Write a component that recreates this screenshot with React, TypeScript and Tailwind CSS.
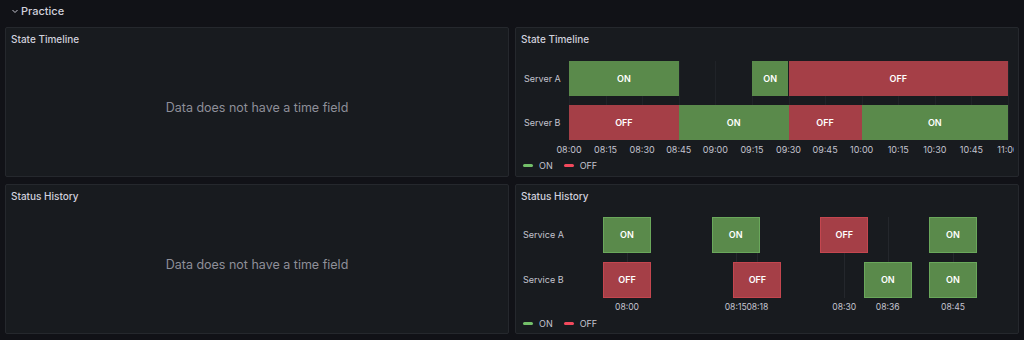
import type { ReactNode } from 'react';

type Seg = { from: number; to: number; on: boolean };

const GREEN = '#5a8a4b';
const RED = '#a53f47';

const TIMELINE: { name: string; segs: Seg[] }[] = [
  {
    name: 'Server A',
    segs: [
      { from: 0, to: 45, on: true },
      { from: 75, to: 90, on: true },
      { from: 90, to: 180, on: false },
    ],
  },
  {
    name: 'Server B',
    segs: [
      { from: 0, to: 45, on: false },
      { from: 45, to: 90, on: true },
      { from: 90, to: 120, on: false },
      { from: 120, to: 180, on: true },
    ],
  },
];

const TICKS = ['08:00', '08:15', '08:30', '08:45', '09:00', '09:15', '09:30', '09:45', '10:00', '10:15', '10:30', '10:45', '11:00'];

// status history: minute offset from 08:00
const HISTORY: { name: string; cells: { min: number; on: boolean }[] }[] = [
  {
    name: 'Service A',
    cells: [
      { min: 0, on: true },
      { min: 15, on: true },
      { min: 30, on: false },
      { min: 45, on: true },
    ],
  },
  {
    name: 'Service B',
    cells: [
      { min: 0, on: false },
      { min: 18, on: false },
      { min: 36, on: true },
      { min: 45, on: true },
    ],
  },
];

const HISTORY_TIMES = [
  { min: 0, label: '08:00' },
  { min: 15, label: '08:15' },
  { min: 18, label: '08:18' },
  { min: 30, label: '08:30' },
  { min: 36, label: '08:36' },
  { min: 45, label: '08:45' },
];

function Panel({ title, children }: { title: string; children?: ReactNode }) {
  return (
    <div className="h-[150px] bg-[#181b1f] border border-[#25282d] rounded-[2px] flex flex-col overflow-hidden">
      <div className="h-[22px] pl-[5px] pt-[4px] text-[10px] font-medium text-[#d0d0dc] leading-[14px]">{title}</div>
      <div className="flex-1 relative">{children}</div>
    </div>
  );
}

function NoData() {
  return (
    <div className="h-full flex items-center justify-center pb-[10px] text-[12.5px] text-[#8e8f99]">
      Data does not have a time field
    </div>
  );
}

function Legend() {
  return (
    <div className="flex items-center gap-[6px] pl-[7px] text-[9px] text-[#c4c4cf]">
      <div className="flex items-center gap-[6px]">
        <span className="w-[10px] h-[3px] rounded-full bg-[#73bf69]" />
        <span>ON</span>
      </div>
      <div className="flex items-center gap-[6px] ml-[5px]">
        <span className="w-[10px] h-[3px] rounded-full bg-[#f2495c]" />
        <span>OFF</span>
      </div>
    </div>
  );
}

function StateTimeline() {
  const W = 439;
  const pct = (m: number) => (m / 180) * W;
  return (
    <div className="pt-[11px]">
      <div className="flex">
        <div className="w-[53px] shrink-0 flex flex-col gap-[9px] pl-[8px]">
          {TIMELINE.map((r) => (
            <div key={r.name} className="h-[35px] flex items-center text-[9px] text-[#c4c4cf]">
              {r.name}
            </div>
          ))}
        </div>
        <div className="relative w-[439px] flex flex-col gap-[9px]">
          {TICKS.map((t, i) => (
            <div key={t} className="absolute top-0 bottom-0 w-px bg-[#202328]" style={{ left: pct(i * 15) }} />
          ))}
          {TIMELINE.map((r) => (
            <div key={r.name} className="relative h-[35px]">
              {r.segs.map((s) => (
                <div
                  key={s.from}
                  className="absolute top-0 bottom-0 flex items-center justify-center text-[9px] font-semibold text-white"
                  style={{ left: pct(s.from), width: pct(s.to) - pct(s.from), background: s.on ? GREEN : RED }}
                >
                  {s.on ? 'ON' : 'OFF'}
                </div>
              ))}
            </div>
          ))}
        </div>
      </div>
      {/* the last tick is cut by the plot edge, as in grafana */}
      <div className="relative h-[19px] w-[498px] overflow-hidden text-[9px] text-[#c4c4cf]">
        {TICKS.map((t, i) => (
          <span key={t} className="absolute top-[3px] -translate-x-1/2" style={{ left: 53 + pct(i * 15) }}>
            {t}
          </span>
        ))}
      </div>
      <Legend />
    </div>
  );
}

function StatusHistory() {
  const x = (m: number) => 111 + m * 7.244;
  return (
    <div className="pt-[10px]">
      <div className="flex">
        <div className="w-[60px] shrink-0 flex flex-col gap-[9px] pl-[7px]">
          {HISTORY.map((r) => (
            <div key={r.name} className="h-[36px] flex items-center text-[9px] text-[#c4c4cf]">
              {r.name}
            </div>
          ))}
        </div>
        <div className="relative flex-1 flex flex-col gap-[9px] -ml-[60px]">
          {HISTORY_TIMES.map((t) => (
            <div key={t.label} className="absolute top-0 bottom-0 w-px bg-[#24272c]" style={{ left: x(t.min) }} />
          ))}
          {HISTORY.map((r) => (
            <div key={r.name} className="relative h-[36px]">
              {r.cells.map((c) => (
                <div
                  key={c.min}
                  className={`absolute top-0 bottom-0 w-[48px] flex items-center justify-center text-[9px] font-semibold text-white border ${
                    c.on ? 'bg-[#5a8a4b] border-[#6aa85b]' : 'bg-[#a53f47] border-[#c4464f]'
                  }`}
                  style={{ left: x(c.min) - 24 }}
                >
                  {c.on ? 'ON' : 'OFF'}
                </div>
              ))}
            </div>
          ))}
        </div>
      </div>
      <div className="relative h-[19px] text-[8.6px] text-[#c4c4cf]">
        {HISTORY_TIMES.map((t) => (
          <span key={t.label} className="absolute top-[3px] -translate-x-1/2" style={{ left: x(t.min) }}>
            {t.label}
          </span>
        ))}
      </div>
      <Legend />
    </div>
  );
}

export default function App() {
  return (
    <div className="w-[1024px] h-[340px] bg-[#111217] overflow-hidden" style={{ fontFamily: 'Inter, "Noto Sans", sans-serif' }}>
      <div className="h-[27px] flex items-start pt-[3px] pl-[11px] gap-[2px] text-[#d0d0dc]">
        <svg width="8" height="16" viewBox="0 0 8 16" className="mt-[0px]">
          <polyline points="1.5,7 4,9.5 6.5,7" fill="none" stroke="#c4c4cf" strokeWidth="1" />
        </svg>
        <span className="text-[11px] font-medium leading-[16px]">Practice</span>
      </div>
      <div className="px-[5px] grid grid-cols-2 gap-x-[6px] gap-y-[7px]">
        <Panel title="State Timeline">
          <NoData />
        </Panel>
        <Panel title="State Timeline">
          <StateTimeline />
        </Panel>
        <Panel title="Status History">
          <NoData />
        </Panel>
        <Panel title="Status History">
          <StatusHistory />
        </Panel>
      </div>
    </div>
  );
}
